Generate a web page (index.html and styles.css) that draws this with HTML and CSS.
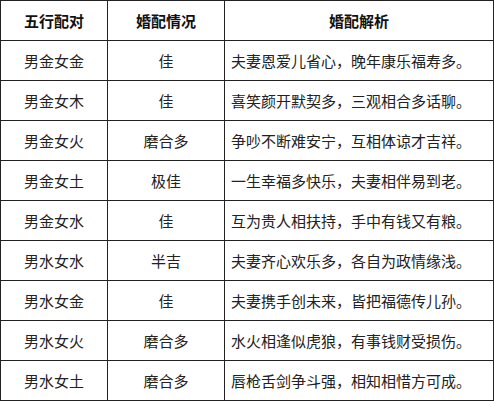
FILE: index.html
```html
<!DOCTYPE html>
<html lang="zh">
<head>
<meta charset="utf-8">
<link rel="stylesheet" href="styles.css">
</head>
<body>
<table class="tbl">
  <colgroup>
    <col class="c1"><col class="c2"><col class="c3">
  </colgroup>
  <thead>
    <tr><th>五行配对</th><th>婚配情况</th><th>婚配解析</th></tr>
  </thead>
  <tbody>
    <tr><td>男金女金</td><td>佳</td><td class="desc">夫妻恩爱儿省心，晚年康乐福寿多。</td></tr>
    <tr><td>男金女木</td><td>佳</td><td class="desc">喜笑颜开默契多，三观相合多话聊。</td></tr>
    <tr><td>男金女火</td><td>磨合多</td><td class="desc">争吵不断难安宁，互相体谅才吉祥。</td></tr>
    <tr><td>男金女土</td><td>极佳</td><td class="desc">一生幸福多快乐，夫妻相伴易到老。</td></tr>
    <tr><td>男金女水</td><td>佳</td><td class="desc">互为贵人相扶持，手中有钱又有粮。</td></tr>
    <tr><td>男水女水</td><td>半吉</td><td class="desc">夫妻齐心欢乐多，各自为政情缘浅。</td></tr>
    <tr><td>男水女金</td><td>佳</td><td class="desc">夫妻携手创未来，皆把福德传儿孙。</td></tr>
    <tr><td>男水女火</td><td>磨合多</td><td class="desc">水火相逢似虎狼，有事钱财受损伤。</td></tr>
    <tr><td>男水女土</td><td>磨合多</td><td class="desc">唇枪舌剑争斗强，相知相惜方可成。</td></tr>
  </tbody>
</table>
</body>
</html>
```
FILE: styles.css
```css
html, body {
  margin: 0;
  padding: 0;
  background: #fff;
}
.tbl {
  border-collapse: collapse;
  width: 493px;
  table-layout: fixed;
  font-family: "Noto Sans CJK SC", "Microsoft YaHei", sans-serif;
  font-size: 15px;
  color: #222;
}
.c1 { width: 107px; }
.c2 { width: 117px; }
.c3 { width: 269px; }
.tbl th, .tbl td {
  border: 1px solid #222;
  height: 39px;
  padding: 0;
  text-align: center;
  vertical-align: middle;
  line-height: 20px;
}
.tbl th {
  font-weight: bold;
  color: #111;
}
.tbl td.desc {
  text-align: left;
  padding-left: 6px;
}
```
